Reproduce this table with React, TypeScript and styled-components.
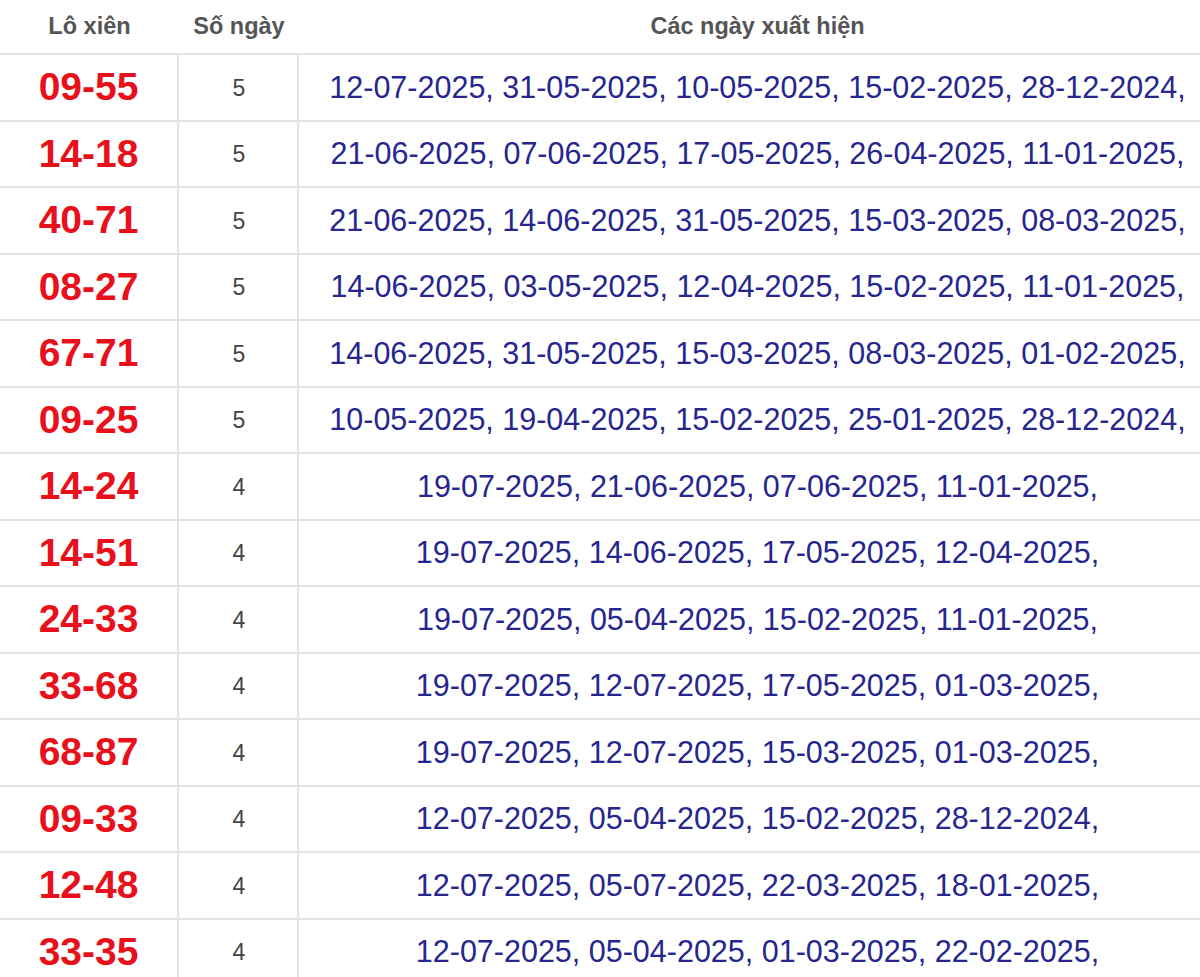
import React from "react";
import styled, { createGlobalStyle } from "styled-components";

const Global = createGlobalStyle`
  html, body { margin: 0; padding: 0; background: #fff; }
  body { font-family: "Liberation Sans", Arial, sans-serif; overflow: hidden; }
`;

const Table = styled.div`
  width: 1200px;
  display: flex;
  flex-direction: column;
`;

const HeaderRow = styled.div`
  display: grid;
  grid-template-columns: 179px 120px 1fr;
  height: 55px;
  box-sizing: border-box;
  border-bottom: 2px solid #e3e3e3;
  align-items: center;
`;

const HeadCell = styled.div<{ $shift?: number }>`
  text-align: center;
  font-weight: bold;
  font-size: 23.5px;
  color: #555;
  padding-left: ${(p) => p.$shift ?? 0}px;
`;

const Row = styled.div`
  display: grid;
  grid-template-columns: 179px 120px 1fr;
  height: 66.5px;
  box-sizing: border-box;
  border-bottom: 2px solid #e3e3e3;
`;

const Cell = styled.div<{ $divider?: boolean }>`
  display: flex;
  align-items: center;
  justify-content: center;
  box-sizing: border-box;
  border-right: ${(p) => (p.$divider ? "2px solid #e3e3e3" : "none")};
`;

const Pair = styled(Cell)`
  font-weight: bold;
  font-size: 39px;
  color: #e8101a;
`;

const Count = styled(Cell)`
  font-size: 23px;
  color: #444;
  padding-top: 2px;
  padding-left: 2px;
`;

const Dates = styled(Cell)`
  font-size: 30.5px;
  color: #26268e;
  padding-left: 16px;
  white-space: nowrap;
`;

const rows: [string, number, string[]][] = [
  ["09-55", 5, ["12-07-2025", "31-05-2025", "10-05-2025", "15-02-2025", "28-12-2024"]],
  ["14-18", 5, ["21-06-2025", "07-06-2025", "17-05-2025", "26-04-2025", "11-01-2025"]],
  ["40-71", 5, ["21-06-2025", "14-06-2025", "31-05-2025", "15-03-2025", "08-03-2025"]],
  ["08-27", 5, ["14-06-2025", "03-05-2025", "12-04-2025", "15-02-2025", "11-01-2025"]],
  ["67-71", 5, ["14-06-2025", "31-05-2025", "15-03-2025", "08-03-2025", "01-02-2025"]],
  ["09-25", 5, ["10-05-2025", "19-04-2025", "15-02-2025", "25-01-2025", "28-12-2024"]],
  ["14-24", 4, ["19-07-2025", "21-06-2025", "07-06-2025", "11-01-2025"]],
  ["14-51", 4, ["19-07-2025", "14-06-2025", "17-05-2025", "12-04-2025"]],
  ["24-33", 4, ["19-07-2025", "05-04-2025", "15-02-2025", "11-01-2025"]],
  ["33-68", 4, ["19-07-2025", "12-07-2025", "17-05-2025", "01-03-2025"]],
  ["68-87", 4, ["19-07-2025", "12-07-2025", "15-03-2025", "01-03-2025"]],
  ["09-33", 4, ["12-07-2025", "05-04-2025", "15-02-2025", "28-12-2024"]],
  ["12-48", 4, ["12-07-2025", "05-07-2025", "22-03-2025", "18-01-2025"]],
  ["33-35", 4, ["12-07-2025", "05-04-2025", "01-03-2025", "22-02-2025"]],
];

export default function App() {
  return (
    <>
      <Global />
      <Table>
        <HeaderRow>
          <HeadCell>Lô xiên</HeadCell>
          <HeadCell>Số ngày</HeadCell>
          <HeadCell $shift={16}>Các ngày xuất hiện</HeadCell>
        </HeaderRow>
        {rows.map(([pair, n, dates], i) => (
          <Row key={i}>
            <Pair $divider>{pair}</Pair>
            <Count $divider>{n}</Count>
            <Dates>{dates.map((d) => d + ",").join(" ")}</Dates>
          </Row>
        ))}
      </Table>
    </>
  );
}
